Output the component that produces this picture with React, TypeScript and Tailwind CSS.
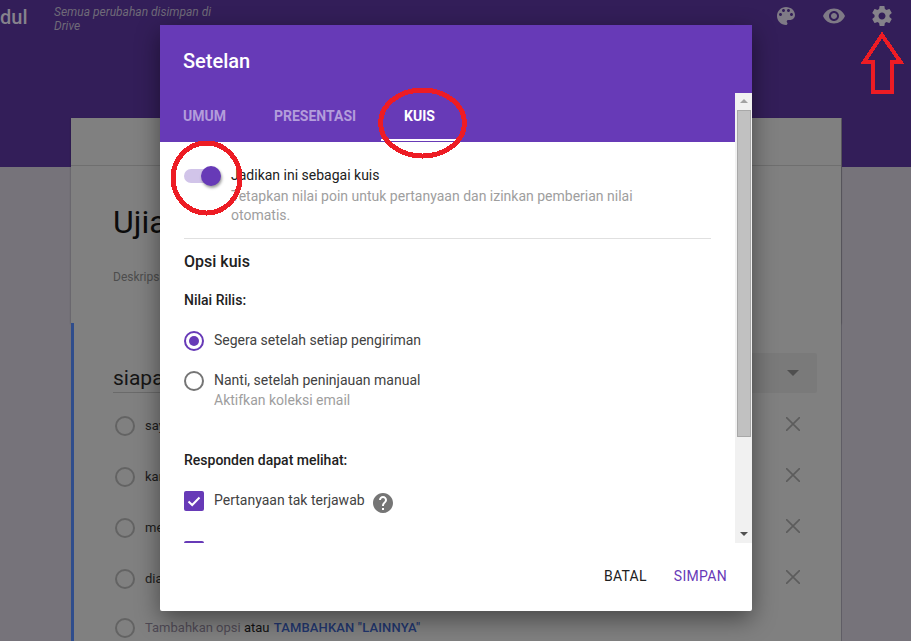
const roboto = "font-['Roboto',sans-serif]";

const palette =
  "M12 3c-4.97 0-9 4.03-9 9s4.03 9 9 9c.83 0 1.5-.67 1.5-1.5 0-.39-.15-.74-.39-1.01-.23-.26-.38-.61-.38-.99 0-.83.67-1.5 1.5-1.5H16c2.76 0 5-2.24 5-5 0-4.42-4.03-8-9-8zm-5.5 9c-.83 0-1.5-.67-1.5-1.5S5.67 9 6.5 9 8 9.67 8 10.5 7.33 12 6.5 12zm3-4C8.67 8 8 7.33 8 6.5S8.67 5 9.5 5s1.5.67 1.5 1.5S10.33 8 9.5 8zm5 0c-.83 0-1.5-.67-1.5-1.5S13.67 5 14.5 5s1.5.67 1.5 1.5S15.33 8 14.5 8zm3 4c-.83 0-1.5-.67-1.5-1.5S16.67 9 17.5 9s1.5.67 1.5 1.5-.67 1.5-1.5 1.5z";
const eye =
  "M12 4.5C7 4.5 2.73 7.61 1 12c1.73 4.39 6 7.5 11 7.5s9.27-3.11 11-7.5c-1.73-4.39-6-7.5-11-7.5zM12 17c-2.76 0-5-2.24-5-5s2.24-5 5-5 5 2.24 5 5-2.24 5-5 5zm0-8c-1.66 0-3 1.34-3 3s1.34 3 3 3 3-1.34 3-3-1.34-3-3-3z";
const gear =
  "M19.43 12.98c.04-.32.07-.64.07-.98s-.03-.66-.07-.98l2.11-1.65c.19-.15.24-.42.12-.64l-2-3.46c-.12-.22-.39-.3-.61-.22l-2.49 1c-.52-.4-1.08-.73-1.69-.98l-.38-2.65C14.46 2.18 14.25 2 14 2h-4c-.25 0-.46.18-.49.42l-.38 2.65c-.61.25-1.17.59-1.69.98l-2.49-1c-.23-.09-.49 0-.61.22l-2 3.46c-.13.22-.07.49.12.64l2.11 1.65c-.04.32-.07.65-.07.98s.03.66.07.98l-2.11 1.65c-.19.15-.24.42-.12.64l2 3.46c.12.22.39.3.61.22l2.49-1c.52.4 1.08.73 1.69.98l.38 2.65c.03.24.24.42.49.42h4c.25 0 .46-.18.49-.42l.38-2.65c.61-.25 1.17-.59 1.69-.98l2.49 1c.23.09.49 0 .61-.22l2-3.46c.12-.22.07-.49-.12-.64l-2.11-1.65zM12 15.5c-1.93 0-3.5-1.57-3.5-3.5s1.57-3.5 3.5-3.5 3.5 1.57 3.5 3.5-1.57 3.5-3.5 3.5z";
const help =
  "M12 2C6.48 2 2 6.48 2 12s4.48 10 10 10 10-4.48 10-10S17.52 2 12 2zm1 17h-2v-2h2v2zm2.07-7.75l-.9.92C13.45 12.9 13 13.5 13 15h-2v-.5c0-1.1.45-2.1 1.17-2.83l1.24-1.26c.37-.36.59-.86.59-1.41 0-1.1-.9-2-2-2s-2 .9-2 2H8c0-2.21 1.79-4 4-4s4 1.79 4 4c0 .88-.36 1.68-.93 2.25z";

function MaterialIcon({ d, className }: { d: string; className: string }) {
  return (
    <svg viewBox="0 0 24 24" className={className} fill="currentColor">
      <path d={d} />
    </svg>
  );
}

function OptionRow({ label }: { label: string }) {
  return (
    <div className="flex h-[51px] items-center pl-[2px]">
      <span className="h-5 w-5 shrink-0 rounded-full border-2 border-[#636363]" />
      <span className="ml-[10px] text-[13px] text-[#1c1c1c]">{label}</span>
      <svg viewBox="0 0 14 14" className="mb-[4px] ml-auto mr-[17px] h-[14px] w-[14px] text-[#5c5c5c]" fill="none" stroke="currentColor" strokeWidth="1.6">
        <path d="M0 0L14 14M14 0L0 14" />
      </svg>
    </div>
  );
}

function FormBackground() {
  return (
    <div className="relative h-[641px] overflow-hidden bg-[#76737a]">
      <header className="flex h-[167px] items-start justify-between bg-[#331e59]">
        <div className="flex pt-[5px]">
          <span className="w-[54px] text-[20px] font-medium leading-[24px] text-[#86828c]">dul</span>
          <p className="w-[170px] text-[12px] italic leading-[14px] text-[#6f6a78]">Semua perubahan disimpan di Drive</p>
        </div>
        <div className="flex gap-6 pr-[17px] pt-[4px] text-[#7f7a86]">
          <MaterialIcon d={palette} className="h-6 w-6" />
          <MaterialIcon d={eye} className="h-6 w-6" />
          <MaterialIcon d={gear} className="h-6 w-6 text-[#85828a]" />
        </div>
      </header>

      <main className="ml-[71px] mt-[-49px] w-[770px] shadow-[1px_0_0_#5f5d65]">
        <section className="h-[205px] bg-[#808080] shadow-[0_1px_2px_rgba(0,0,0,0.3)]">
          <div className="h-[48px] border-b border-[#6f6f6f]" />
          <div className="px-[42px]">
            <h1 className="mt-[33px] text-[32px] leading-[46px] text-[#0c0c0c]">Ujian</h1>
            <p className="mt-[23px] text-[12px] text-[#4d4d4d]">Deskripsi</p>
          </div>
        </section>
        <section className="h-[330px] border-l-[3px] border-[#2f4d8c] bg-[#808080] pl-[39px] pr-[24px] pt-[30px]">
          <div className="flex h-[40px] items-start">
            <div className="w-[340px] border-b border-[#6a6a6a] pt-[11px] text-[21px] leading-[28px] text-[#151515]">siapa</div>
            <div className="ml-auto flex h-[40px] w-[340px] items-center justify-end rounded-[2px] bg-[#7a7a7a] pr-[18px]">
              <span className="h-0 w-0 border-x-[6px] border-t-[6px] border-x-transparent border-t-[#4f4f4f]" />
            </div>
          </div>
          <div className="mt-[7px]">
            <OptionRow label="saya" />
            <OptionRow label="kamu" />
            <OptionRow label="mereka" />
            <OptionRow label="dia" />
            <div className="flex h-[47px] items-center pl-[2px]">
              <span className="h-5 w-5 shrink-0 rounded-full border-2 border-[#636363]" />
              <span className="ml-[10px] text-[13px] text-[#4f4a55]">
                Tambahkan opsi <span className="text-[#111]">atau</span>{" "}
                <span className="ml-px font-medium tracking-[0.15px] text-[#22366e]">TAMBAHKAN "LAINNYA"</span>
              </span>
            </div>
          </div>
        </section>
      </main>
    </div>
  );
}

function SettingsDialog() {
  return (
    <div className="absolute left-[160px] top-[25px] flex h-[586px] w-[592px] flex-col rounded-[2px] bg-white shadow-[0_8px_24px_rgba(0,0,0,0.45)]">
      <div className="h-[117px] shrink-0 bg-[#673ab7]">
        <h2 className="pl-[23px] pt-[25px] text-[20px] font-medium leading-[22px] text-white">Setelan</h2>
        <div className="mt-[34px] flex text-[14px] font-bold leading-[20px] text-[#b39ddb]">
          <span className="ml-[23px]">UMUM</span>
          <span className="ml-[48px]">PRESENTASI</span>
          <span className="relative ml-[48px] text-white">
            KUIS
            <span className="absolute left-[-23px] top-[33px] h-[2px] w-[76px] bg-white" />
          </span>
        </div>
      </div>

      <div className="h-[401px] shrink-0 overflow-hidden pl-[24px] pr-[41px] text-[14px]">
        <div className="flex pt-[23px]">
          <div className="relative mt-px h-[20px] w-[37px] shrink-0">
            <span className="absolute left-0 top-[3px] h-[14px] w-[34px] rounded-full bg-[#d1c4e9]" />
            <span className="absolute right-0 top-0 h-[20px] w-[20px] rounded-full bg-[#673ab7] shadow-[1px_2px_3px_rgba(0,0,0,0.4)]" />
          </div>
          <div className="ml-[10px] w-[420px]">
            <p className="leading-[20px] text-[#212121]">Jadikan ini sebagai kuis</p>
            <p className="mt-[2px] leading-[19px] text-[#9e9e9e]">Tetapkan nilai poin untuk pertanyaan dan izinkan pemberian nilai otomatis.</p>
          </div>
        </div>
        <div className="mt-[13px] h-px bg-[#e0e0e0]" />
        <h3 className="mt-[13px] text-[16px] font-medium leading-[20px] text-[#212121]">Opsi kuis</h3>
        <h4 className="mt-[18px] font-medium leading-[20px] text-[#212121]">Nilai Rilis:</h4>
        <div className="mt-[21px] flex items-start">
          <span className="flex h-5 w-5 items-center justify-center rounded-full border-2 border-[#673ab7]">
            <span className="h-[10px] w-[10px] rounded-full bg-[#673ab7]" />
          </span>
          <span className="ml-[10px] mt-[-1px] leading-[20px] text-[#424242]">Segera setelah setiap pengiriman</span>
        </div>
        <div className="mt-[20px] flex">
          <span className="h-5 w-5 rounded-full border-2 border-[#757575]" />
          <div className="ml-[10px] mt-[-1px] leading-[20px]">
            <p className="text-[#424242]">Nanti, setelah peninjauan manual</p>
            <p className="text-[#9e9e9e]">Aktifkan koleksi email</p>
          </div>
        </div>
        <h4 className="mt-[40px] font-medium leading-[20px] text-[#212121]">Responden dapat melihat:</h4>
        <div className="mt-[21px] flex items-start">
          <span className="flex h-5 w-5 items-center justify-center rounded-[2px] bg-[#673ab7]">
            <svg viewBox="0 0 20 20" className="h-5 w-5" fill="none" stroke="white" strokeWidth="2">
              <path d="M4.5 10.5L8.2 14L15.5 6.5" />
            </svg>
          </span>
          <span className="ml-[10px] mt-[-1px] leading-[20px] text-[#424242]">Pertanyaan tak terjawab</span>
          <MaterialIcon d={help} className="ml-[6px] h-6 w-6 text-[#757575]" />
        </div>
        <div className="mt-[26px] h-5 w-5 rounded-[2px] bg-[#673ab7]" />
      </div>

      <div className="flex flex-1 items-start justify-end pr-[25px] pt-[24px] text-[14px] leading-[18px] tracking-[0.3px]">
        <span className="text-[#212121]">BATAL</span>
        <span className="ml-[27px] text-[#673ab7]">SIMPAN</span>
      </div>

      {/* scrollbar sits over the header */}
      <div className="absolute right-0 top-[68px] flex h-[450px] w-[17px] flex-col items-center bg-[#f1f1f1]">
        <span className="mt-[6px] h-0 w-0 border-x-[4px] border-b-[4px] border-x-transparent border-b-[#a3a3a3]" />
        <span className="mt-[7px] h-[327px] w-[14px] border border-[#a8a8a8] bg-[#c1c1c1]" />
        <span className="mt-auto mb-[7px] h-0 w-0 border-x-[4px] border-t-[4px] border-x-transparent border-t-[#505050]" />
      </div>
    </div>
  );
}

function Annotations() {
  return (
    <svg className="pointer-events-none absolute inset-0" width="911" height="641" fill="none" stroke="#ed1c24" strokeWidth="5" shapeRendering="crispEdges">
      <ellipse cx="206.5" cy="178" rx="33.5" ry="35" />
      <ellipse cx="422.5" cy="123" rx="42" ry="33" />
      <path d="M882 35L864 62H872.5V92H892V62H900.5Z" strokeWidth="4" />
    </svg>
  );
}

export default function App() {
  return (
    <div className={`relative h-[641px] w-[911px] overflow-hidden ${roboto}`}>
      <FormBackground />
      <SettingsDialog />
      <Annotations />
    </div>
  );
}
